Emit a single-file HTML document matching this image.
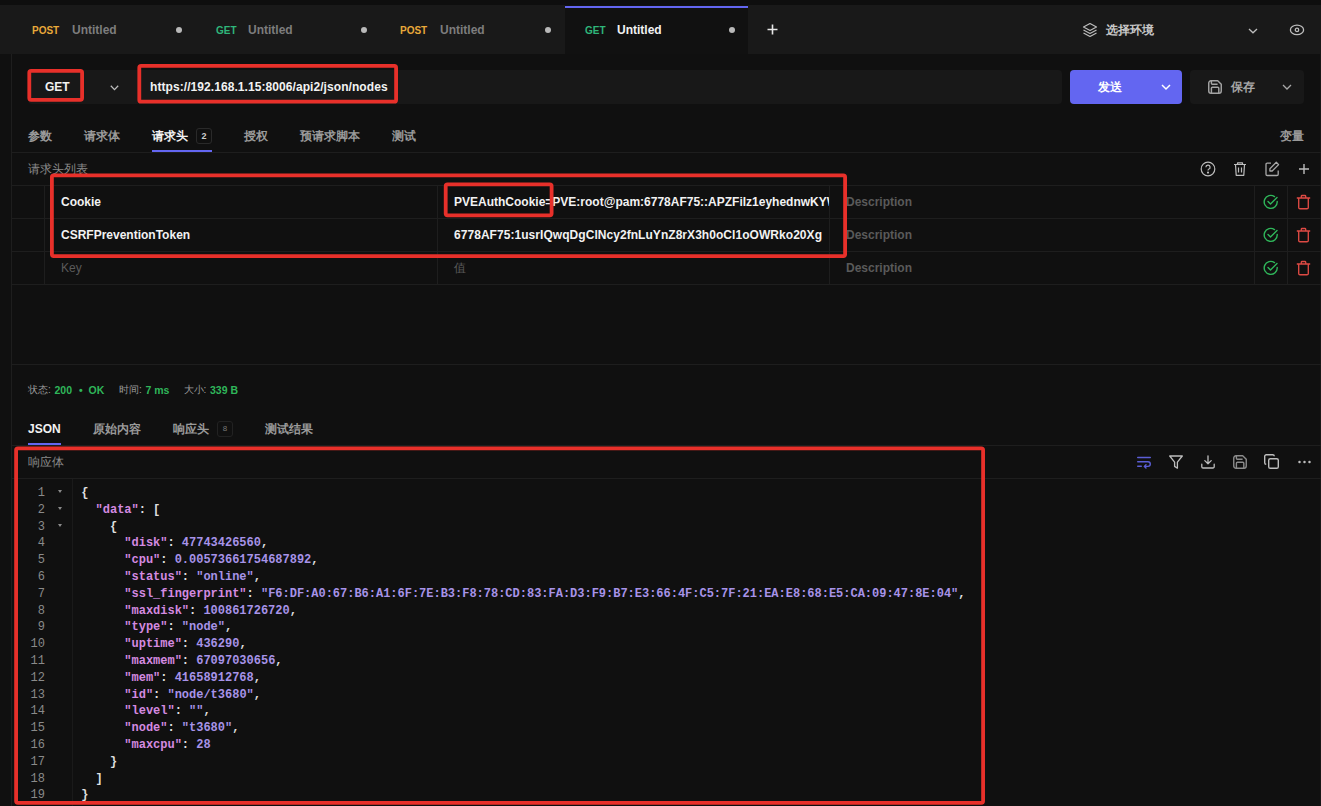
<!DOCTYPE html>
<html><head><meta charset="utf-8">
<style>
*{box-sizing:border-box;margin:0;padding:0}
html,body{width:1321px;height:806px;overflow:hidden;background:#101010;font-family:"Liberation Sans",sans-serif;color:#e6e6e6}
.a{position:absolute}
.tab{position:absolute;top:0;height:49px}
.tab .m{position:absolute;top:20px;font-size:10px;font-weight:bold;line-height:12px}
.tab .t{position:absolute;top:18px;font-size:12px;font-weight:bold;line-height:14px;color:#7d7d7d;white-space:nowrap}
.tab .d{position:absolute;top:22px;width:6px;height:6px;border-radius:50%;background:#b9b9b9}
.post{color:#e8a93a}
.get{color:#2fb67a}
.vl{position:absolute;background:#1e1e1e;width:1px}
.hl{position:absolute;background:#1e1e1e;height:1px}
.red{position:absolute;border:4px solid #e8302a;border-radius:5px}
.t12{font-size:12px;line-height:14px;white-space:nowrap}
.b{font-weight:bold}
.cj{}
.cjr{font-weight:500}
.code{position:absolute;font-family:"Liberation Mono",monospace;font-size:12px;font-weight:bold;line-height:16.8px;white-space:pre;color:#e0e0e0}
.k{color:#d48ae0}
.v{color:#a793e8}
.ln{position:absolute;font-family:"Liberation Mono",monospace;font-size:12px;line-height:16.8px;white-space:pre;color:#8a8a8a;text-align:right}
svg{position:absolute;overflow:visible}
</style></head><body>
<!-- top strip -->
<div class="a" style="left:0;top:0;width:1321px;height:5px;background:#0e0e0e"></div>
<div class="a" style="left:0;top:5px;width:1321px;height:49px;background:#191919">
  <div class="tab" style="left:0;width:195px">
    <span class="m post" style="left:32px">POST</span><span class="t" style="left:72px">Untitled</span><span class="d" style="left:176px"></span>
  </div>
  <div class="tab" style="left:195px;width:185px">
    <span class="m get" style="left:21px">GET</span><span class="t" style="left:53px">Untitled</span><span class="d" style="left:166px"></span>
  </div>
  <div class="tab" style="left:380px;width:185px">
    <span class="m post" style="left:20px">POST</span><span class="t" style="left:60px">Untitled</span><span class="d" style="left:165px"></span>
  </div>
  <div class="tab" style="left:565px;width:183px;background:#111111">
    <div class="a" style="left:0;top:1px;width:183px;height:2px;background:#6366f1"></div>
    <span class="m get" style="left:20px">GET</span><span class="t" style="left:52px;color:#f2f2f2">Untitled</span><span class="d" style="left:164px"></span>
  </div>
  <!-- plus -->
  <svg style="left:767px;top:19px" width="11" height="11" viewBox="0 0 11 11"><path d="M5.5 0.5V10.5M0.5 5.5H10.5" stroke="#e6e6e6" stroke-width="1.6"/></svg>
  <!-- layers icon -->
  <svg style="left:1082px;top:17px" width="16" height="16" viewBox="0 0 16 16" fill="none" stroke="#bdbdbd" stroke-width="1.2" stroke-linejoin="round"><path d="M8 1.5L14.5 5L8 8.5L1.5 5Z"/><path d="M1.5 8L8 11.5L14.5 8"/><path d="M1.5 11L8 14.5L14.5 11"/></svg>
  <span class="a t12 b cj" style="left:1106px;top:18px;color:#c8c8c8">选择环境</span>
  <svg style="left:1248px;top:22.5px" width="10" height="6" viewBox="0 0 10 6"><path d="M1 1L5 4.8L9 1" stroke="#bdbdbd" stroke-width="1.3" fill="none"/></svg>
  <svg style="left:1289px;top:19px" width="16" height="12" viewBox="0 0 16 12" fill="none" stroke="#bdbdbd" stroke-width="1.3"><ellipse cx="8" cy="5.9" rx="6.6" ry="4.7"/><circle cx="8" cy="5.9" r="1.7"/></svg>
</div>

<!-- left sidebar line -->
<div class="vl" style="left:1320px;top:54px;height:752px;background:#181818"></div>
<div class="vl" style="left:11px;top:54px;height:752px"></div>

<!-- URL row -->
<div class="a" style="left:28px;top:70px;width:1034px;height:34px;background:#181818;border-radius:4px"></div>
<span class="a t12 b" style="left:45px;top:80px;color:#f2f2f2">GET</span>
<svg style="left:110px;top:85px" width="9" height="6" viewBox="0 0 9 6"><path d="M0.8 0.8L4.5 4.6L8.2 0.8" stroke="#bdbdbd" stroke-width="1.3" fill="none"/></svg>
<span class="a t12 b" style="left:150px;top:80px;color:#f2f2f2;letter-spacing:0.07px">https://192.168.1.15:8006/api2/json/nodes</span>
<div class="a" style="left:1070px;top:70px;width:112px;height:34px;background:#6366f1;border-radius:4px"></div>
<span class="a t12 b cj" style="left:1098px;top:80px;color:#ffffff">发送</span>
<svg style="left:1161px;top:84px" width="10" height="6" viewBox="0 0 10 6"><path d="M1 1L5 5L9 1" stroke="#ffffff" stroke-width="1.5" fill="none"/></svg>
<div class="a" style="left:1190px;top:70px;width:114px;height:34px;background:#181818;border-radius:4px"></div>
<svg style="left:1208px;top:80px" width="14" height="14" viewBox="0 0 14 14" fill="none" stroke="#a4a4a4" stroke-width="1.45" stroke-linejoin="round"><path d="M0.75 3A2.25 2.25 0 0 1 3 0.75H9.7L13.25 4.3V11A2.25 2.25 0 0 1 11 13.25H3A2.25 2.25 0 0 1 0.75 11Z"/><path d="M3.4 0.75V3.3A0.9 0.9 0 0 0 4.3 4.2H9.6"/><path d="M3.4 13.25V8.2A1 1 0 0 1 4.4 7.2H9.8A1 1 0 0 1 10.8 8.2V13.25"/></svg>
<span class="a t12 b cj" style="left:1231px;top:80px;color:#a8a8a8">保存</span>
<svg style="left:1282px;top:84px" width="10" height="6" viewBox="0 0 10 6"><path d="M1 1L5 5L9 1" stroke="#a8a8a8" stroke-width="1.3" fill="none"/></svg>

<!-- request tabs -->
<span class="a t12 b cj" style="left:28px;top:129px;color:#9a9a9a">参数</span>
<span class="a t12 b cj" style="left:84px;top:129px;color:#9a9a9a">请求体</span>
<span class="a t12 b cj" style="left:152px;top:129px;color:#f2f2f2">请求头</span>
<div class="a" style="left:196px;top:128px;width:16px;height:16px;border:1px solid #2a2a2a;border-radius:3px;font-size:9px;font-weight:bold;line-height:14px;text-align:center;color:#cccccc">2</div>
<div class="a" style="left:152px;top:150px;width:60px;height:2px;background:#6366f1"></div>
<span class="a t12 b cj" style="left:244px;top:129px;color:#9a9a9a">授权</span>
<span class="a t12 b cj" style="left:300px;top:129px;color:#9a9a9a">预请求脚本</span>
<span class="a t12 b cj" style="left:392px;top:129px;color:#9a9a9a">测试</span>
<span class="a t12 b cj" style="left:1280px;top:129px;color:#9a9a9a">变量</span>
<div class="hl" style="left:11px;top:152px;width:1310px"></div>

<span class="a t12 cjr" style="left:28px;top:162px;color:#8a8a8a">请求头列表</span>
<!-- header icons -->
<svg style="left:1200px;top:161px" width="16" height="16" viewBox="0 0 16 16" fill="none" stroke="#bdbdbd" stroke-width="1.2"><circle cx="8" cy="8" r="6.8"/><path d="M5.9 6.2A2.1 2.1 0 1 1 8.6 8.2C8.1 8.4 8 8.8 8 9.4"/><circle cx="8" cy="11.6" r="0.5" fill="#bdbdbd"/></svg>
<svg style="left:1232px;top:161px" width="16" height="16" viewBox="0 0 16 16" fill="none" stroke="#bdbdbd" stroke-width="1.2" stroke-linejoin="round"><path d="M2 3.5H14M5.5 3.5V1.8H10.5V3.5M3.5 3.5L4.2 14.3H11.8L12.5 3.5M6.5 6.5V11.5M9.5 6.5V11.5"/></svg>
<svg style="left:1264px;top:161px" width="16" height="16" viewBox="0 0 16 16" fill="none" stroke="#a8a8a8" stroke-width="1.3" stroke-linejoin="round"><path d="M7 2.2H3.2A1.2 1.2 0 0 0 2 3.4V13.3A1.2 1.2 0 0 0 3.2 14.5H13A1.2 1.2 0 0 0 14.2 13.3V9.5"/><path d="M12.3 1.3L14.6 3.6L8.2 10H5.9V7.7Z"/></svg>
<svg style="left:1299px;top:164px" width="10" height="10" viewBox="0 0 10 10"><path d="M5 0V10M0 5H10" stroke="#bdbdbd" stroke-width="1.4"/></svg>

<!-- table lines -->
<div class="hl" style="left:11px;top:185px;width:1310px"></div>
<div class="hl" style="left:11px;top:218px;width:1310px"></div>
<div class="hl" style="left:11px;top:251px;width:1310px"></div>
<div class="hl" style="left:11px;top:284px;width:1310px"></div>
<div class="vl" style="left:44px;top:185px;height:99px"></div>
<div class="vl" style="left:437px;top:185px;height:99px"></div>
<div class="vl" style="left:829px;top:185px;height:99px"></div>
<div class="vl" style="left:1254px;top:185px;height:99px"></div>
<div class="vl" style="left:1287px;top:185px;height:99px"></div>

<span class="a t12 b" style="left:61px;top:195px;color:#f2f2f2">Cookie</span>
<span class="a t12 b" style="left:61px;top:228px;color:#f2f2f2">CSRFPreventionToken</span>
<span class="a t12" style="left:61px;top:261px;color:#5a5a5a">Key</span>
<div class="a t12" style="left:454px;top:195px;width:375px;overflow:hidden"><span class="b" style="color:#f2f2f2">PVEAuthCookie=PVE:root@pam:6778AF75::APZFilz1eyhednwKYWxyz</span></div>
<span class="a t12 b" style="left:454px;top:228px;color:#f2f2f2;letter-spacing:0.05px">6778AF75:1usrIQwqDgClNcy2fnLuYnZ8rX3h0oCl1oOWRko20Xg</span>
<span class="a t12 cjr" style="left:454px;top:261px;color:#5a5a5a">值</span>
<span class="a t12 b" style="left:846px;top:195px;color:#5a5a5a">Description</span>
<span class="a t12 b" style="left:846px;top:228px;color:#5a5a5a">Description</span>
<span class="a t12 b" style="left:846px;top:261px;color:#5a5a5a">Description</span>

<!-- check & delete icons -->
<svg style="left:1263px;top:194px" width="16" height="16" viewBox="0 0 16 16" fill="none" stroke="#2fb65a" stroke-width="1.4" stroke-linecap="round" stroke-linejoin="round"><path d="M14.2 7.5A6.5 6.5 0 1 1 11.5 2.6"/><path d="M5 7.5L7.5 10L14 3.5"/></svg>
<svg style="left:1263px;top:227px" width="16" height="16" viewBox="0 0 16 16" fill="none" stroke="#2fb65a" stroke-width="1.4" stroke-linecap="round" stroke-linejoin="round"><path d="M14.2 7.5A6.5 6.5 0 1 1 11.5 2.6"/><path d="M5 7.5L7.5 10L14 3.5"/></svg>
<svg style="left:1263px;top:260px" width="16" height="16" viewBox="0 0 16 16" fill="none" stroke="#2fb65a" stroke-width="1.4" stroke-linecap="round" stroke-linejoin="round"><path d="M14.2 7.5A6.5 6.5 0 1 1 11.5 2.6"/><path d="M5 7.5L7.5 10L14 3.5"/></svg>
<svg style="left:1296px;top:194px" width="15" height="16" viewBox="0 0 15 16" fill="none" stroke="#de4a44" stroke-width="1.35" stroke-linejoin="round"><path d="M0.8 4H14.2M5.3 4V2.3A0.8 0.8 0 0 1 6.1 1.5H8.9A0.8 0.8 0 0 1 9.7 2.3V4M2.7 4V13.4A1.3 1.3 0 0 0 4 14.7H11A1.3 1.3 0 0 0 12.3 13.4V4"/></svg>
<svg style="left:1296px;top:227px" width="15" height="16" viewBox="0 0 15 16" fill="none" stroke="#de4a44" stroke-width="1.35" stroke-linejoin="round"><path d="M0.8 4H14.2M5.3 4V2.3A0.8 0.8 0 0 1 6.1 1.5H8.9A0.8 0.8 0 0 1 9.7 2.3V4M2.7 4V13.4A1.3 1.3 0 0 0 4 14.7H11A1.3 1.3 0 0 0 12.3 13.4V4"/></svg>
<svg style="left:1296px;top:260px" width="15" height="16" viewBox="0 0 15 16" fill="none" stroke="#de4a44" stroke-width="1.35" stroke-linejoin="round"><path d="M0.8 4H14.2M5.3 4V2.3A0.8 0.8 0 0 1 6.1 1.5H8.9A0.8 0.8 0 0 1 9.7 2.3V4M2.7 4V13.4A1.3 1.3 0 0 0 4 14.7H11A1.3 1.3 0 0 0 12.3 13.4V4"/></svg>

<div class="hl" style="left:11px;top:364px;width:1310px"></div>

<!-- status -->
<div class="a b" style="left:0;top:384px;font-size:10.5px;line-height:12px;white-space:nowrap;color:#2fb65a">
<span class="a cjr" style="left:28px;top:0;color:#9a9a9a;font-size:10px">状态:</span><span class="a" style="left:54.5px;top:0">200</span><span class="a" style="left:79px;top:0">•</span><span class="a" style="left:88.5px;top:0">OK</span>
<span class="a cjr" style="left:119px;top:0;color:#9a9a9a;font-size:10px">时间:</span><span class="a" style="left:145.5px;top:0">7 ms</span>
<span class="a cjr" style="left:183.5px;top:0;color:#9a9a9a;font-size:10px">大小:</span><span class="a" style="left:210px;top:0">339 B</span>
</div>
<!-- response tabs -->
<span class="a t12 b" style="left:28px;top:422px;color:#f2f2f2">JSON</span>
<div class="a" style="left:28px;top:443px;width:33px;height:2px;background:#6366f1"></div>
<span class="a t12 b cj" style="left:93px;top:422px;color:#9a9a9a">原始内容</span>
<span class="a t12 b cj" style="left:173px;top:422px;color:#9a9a9a">响应头</span>
<div class="a" style="left:217px;top:421px;width:16px;height:16px;border:1px solid #222;border-radius:3px;font-size:8px;line-height:14px;text-align:center;color:#777">8</div>
<span class="a t12 b cj" style="left:265px;top:422px;color:#9a9a9a">测试结果</span>

<div class="hl" style="left:11px;top:445px;width:1310px"></div>
<span class="a t12 cjr" style="left:28px;top:455px;color:#8a8a8a">响应体</span>
<div class="hl" style="left:11px;top:478px;width:1310px"></div>

<!-- response icons -->
<svg style="left:1137px;top:456px" width="14" height="12" viewBox="0 0 14 12" fill="none" stroke="#5b5ed6" stroke-width="1.4" stroke-linecap="round" stroke-linejoin="round"><path d="M0.7 1.5H13.3M0.7 5.8H11A2.3 2.3 0 0 1 11 10.4H7.5M0.7 10.2H4.3"/><path d="M9 8.8L7.4 10.4L9 12"/></svg>
<svg style="left:1169px;top:455px" width="14" height="14" viewBox="0 0 14 14" fill="none" stroke="#bdbdbd" stroke-width="1.3" stroke-linejoin="round"><path d="M0.7 1H13.3L8.4 7.2V13.2L5.6 11.4V7.2Z"/></svg>
<svg style="left:1201px;top:455px" width="14" height="14" viewBox="0 0 14 14" fill="none" stroke="#bdbdbd" stroke-width="1.3" stroke-linecap="round" stroke-linejoin="round"><path d="M7 0.8V8.8M3.8 5.6L7 8.8L10.2 5.6"/><path d="M0.8 9.2V11.8A1.2 1.2 0 0 0 2 13H12A1.2 1.2 0 0 0 13.2 11.8V9.2"/></svg>
<svg style="left:1233px;top:455px" width="14" height="14" viewBox="0 0 14 14" fill="none" stroke="#8c8c8c" stroke-width="1.4" stroke-linejoin="round"><path d="M0.75 3A2.25 2.25 0 0 1 3 0.75H9.7L13.25 4.3V11A2.25 2.25 0 0 1 11 13.25H3A2.25 2.25 0 0 1 0.75 11Z"/><path d="M3.4 0.75V3.3A0.9 0.9 0 0 0 4.3 4.2H9.6"/><path d="M3.4 13.25V8.2A1 1 0 0 1 4.4 7.2H9.8A1 1 0 0 1 10.8 8.2V13.25"/></svg>
<svg style="left:1264px;top:454px" width="15" height="15" viewBox="0 0 15 15" fill="none" stroke="#bdbdbd" stroke-width="1.4" stroke-linejoin="round"><rect x="4.7" y="4.7" width="9.6" height="9.6" rx="1.6"/><path d="M10.3 2.2A1.6 1.6 0 0 0 8.7 0.7H2.3A1.6 1.6 0 0 0 0.7 2.3V8.7A1.6 1.6 0 0 0 2.2 10.3"/></svg>
<svg style="left:1298px;top:460px" width="13" height="4" viewBox="0 0 13 4" fill="#bdbdbd"><circle cx="1.5" cy="2" r="1.25"/><circle cx="6.5" cy="2" r="1.25"/><circle cx="11.5" cy="2" r="1.25"/></svg>

<!-- gutter -->
<div class="vl" style="left:72px;top:479px;height:327px;background:#1a1a1a"></div>
<div class="ln" style="left:22px;top:485px;width:23px">1
2
3
4
5
6
7
8
9
10
11
12
13
14
15
16
17
18
19</div>
<div class="a" style="left:58px;top:490px;width:0;height:0;border-left:2.5px solid transparent;border-right:2.5px solid transparent;border-top:3px solid #8a8a8a"></div>
<div class="a" style="left:58px;top:507px;width:0;height:0;border-left:2.5px solid transparent;border-right:2.5px solid transparent;border-top:3px solid #8a8a8a"></div>
<div class="a" style="left:58px;top:524px;width:0;height:0;border-left:2.5px solid transparent;border-right:2.5px solid transparent;border-top:3px solid #8a8a8a"></div>

<div class="code" style="left:81.2px;top:485px;letter-spacing:-0.012px">{
  <span class="k">"data"</span>: [
    {
      <span class="k">"disk"</span>: <span class="v">47743426560</span>,
      <span class="k">"cpu"</span>: <span class="v">0.00573661754687892</span>,
      <span class="k">"status"</span>: <span class="v">"online"</span>,
      <span class="k">"ssl_fingerprint"</span>: <span class="v">"F6:DF:A0:67:B6:A1:6F:7E:B3:F8:78:CD:83:FA:D3:F9:B7:E3:66:4F:C5:7F:21:EA:E8:68:E5:CA:09:47:8E:04"</span>,
      <span class="k">"maxdisk"</span>: <span class="v">100861726720</span>,
      <span class="k">"type"</span>: <span class="v">"node"</span>,
      <span class="k">"uptime"</span>: <span class="v">436290</span>,
      <span class="k">"maxmem"</span>: <span class="v">67097030656</span>,
      <span class="k">"mem"</span>: <span class="v">41658912768</span>,
      <span class="k">"id"</span>: <span class="v">"node/t3680"</span>,
      <span class="k">"level"</span>: <span class="v">""</span>,
      <span class="k">"node"</span>: <span class="v">"t3680"</span>,
      <span class="k">"maxcpu"</span>: <span class="v">28</span>
    }
  ]
}</div>

<!-- red annotation boxes -->
<svg style="left:0;top:0" width="1321" height="806" fill="none" stroke="#e8302a" stroke-width="3.8"><rect x="29.30" y="70.90" width="52.80" height="29.00" rx="1.8"/><rect x="139.30" y="65.90" width="256.80" height="35.80" rx="1.8"/><rect x="51.90" y="175.30" width="793.20" height="80.80" rx="1.8"/><rect x="445.70" y="184.40" width="105.90" height="31.00" rx="1.8"/><rect x="16.10" y="448.30" width="967.00" height="354.60" rx="1.8"/></svg>
</body></html>
